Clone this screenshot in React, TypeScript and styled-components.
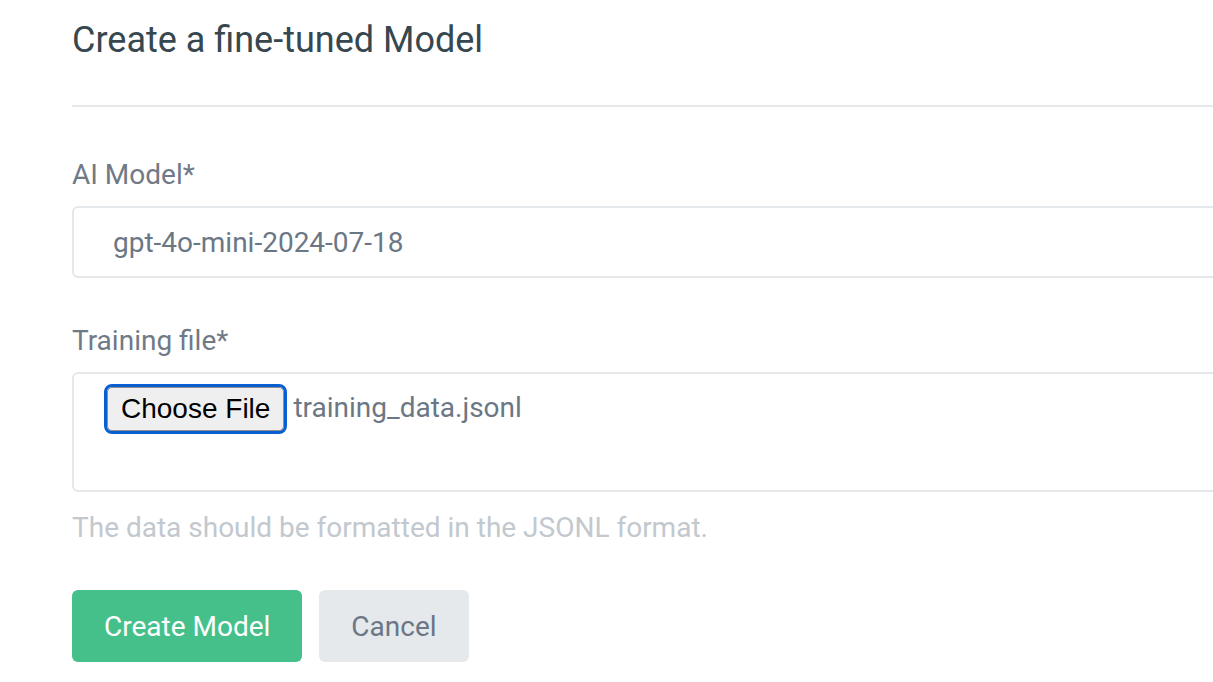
import React from "react";
import styled, { createGlobalStyle } from "styled-components";

const GlobalStyle = createGlobalStyle`
  body {
    margin: 0;
    background: #ffffff;
    font-family: Roboto, "Noto Sans", sans-serif;
  }
`;

const Page = styled.div`
  padding: 18px 0 0 72px;
  overflow: hidden;
`;

const Title = styled.h1`
  margin: 0;
  font-size: 36px;
  font-weight: 400;
  color: #36474f;
  line-height: 44px;
`;

const Divider = styled.hr`
  border: none;
  border-top: 2px solid #e5e9ec;
  margin: 43px 0 0 0;
  width: 1200px;
`;

const Field = styled.div<{ $gap?: number }>`
  display: flex;
  flex-direction: column;
  margin-top: ${(p) => p.$gap ?? 52}px;
`;

const Label = styled.label`
  font-size: 28px;
  color: #6f7a86;
  line-height: 32px;
  margin-bottom: 15px;
`;

const SelectBox = styled.div`
  box-sizing: border-box;
  width: 1200px;
  height: 72px;
  border: 2px solid #e4e8eb;
  border-radius: 6px;
  padding-left: 39px;
  display: flex;
  align-items: center;
  font-size: 28px;
  color: #6b7785;
`;

const FileBox = styled.div`
  box-sizing: border-box;
  width: 1200px;
  height: 120px;
  border: 2px solid #e4e8eb;
  border-radius: 6px;
  padding: 12px 0 0 30px;
  display: flex;
  align-items: flex-start;
  gap: 9px;
`;

const ChooseButton = styled.button`
  box-sizing: border-box;
  height: 44px;
  padding: 0 13px;
  background: #efefef;
  border: 1px solid #8f8f8f;
  outline: 3px solid #0a5fd0;
  outline-offset: 0;
  border-radius: 5px;
  font-family: "Liberation Sans", Arial, sans-serif;
  font-size: 28px;
  color: #000;
  margin: 1px 0 0 3px;
`;

const FileName = styled.span`
  font-size: 28px;
  color: #6b7785;
  line-height: 44px;
`;

const Hint = styled.p`
  margin: 20px 0 0 0;
  font-size: 28px;
  color: #c2c8ce;
  line-height: 32px;
`;

const Actions = styled.div`
  display: flex;
  gap: 17px;
  margin-top: 46px;
`;

const Button = styled.button<{ $primary?: boolean }>`
  height: 72px;
  padding: 0 32px;
  border: none;
  border-radius: 6px;
  font-family: Roboto, "Noto Sans", sans-serif;
  font-size: 28px;
  background: ${(p) => (p.$primary ? "#46c08a" : "#e5e9ec")};
  color: ${(p) => (p.$primary ? "#ffffff" : "#6b7785")};
`;

export default function App() {
  return (
    <>
      <GlobalStyle />
      <Page>
        <Title>Create a fine-tuned Model</Title>
        <Divider />
        <Field>
          <Label>AI Model*</Label>
          <SelectBox>gpt-4o-mini-2024-07-18</SelectBox>
        </Field>
        <Field $gap={47}>
          <Label>Training file*</Label>
          <FileBox>
            <ChooseButton>Choose File</ChooseButton>
            <FileName>training_data.jsonl</FileName>
          </FileBox>
        </Field>
        <Hint>The data should be formatted in the JSONL format.</Hint>
        <Actions>
          <Button $primary>Create Model</Button>
          <Button>Cancel</Button>
        </Actions>
      </Page>
    </>
  );
}
